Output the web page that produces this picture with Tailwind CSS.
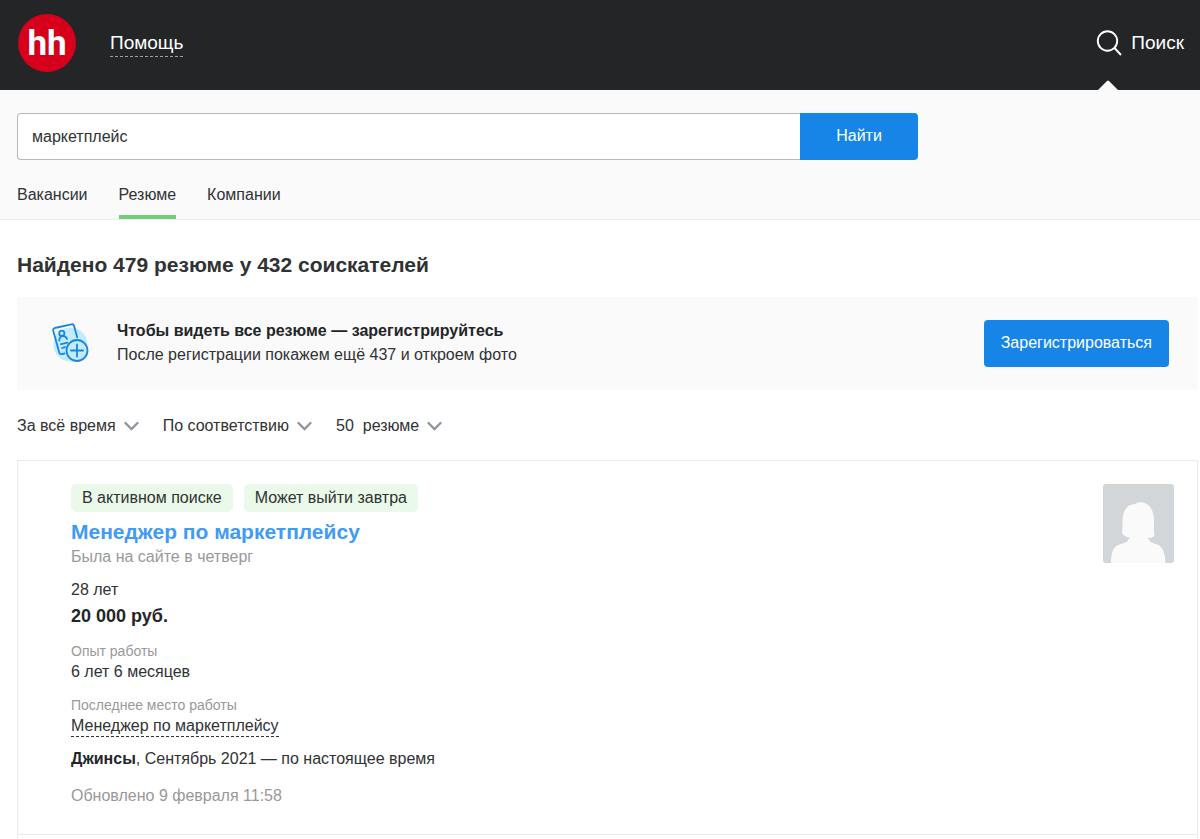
<!DOCTYPE html>
<html lang="ru">
<head>
<meta charset="utf-8">
<meta name="viewport" content="width=device-width, initial-scale=1">
<title>Резюме — маркетплейс</title>
<script src="https://cdn.jsdelivr.net/npm/@tailwindcss/browser@4"></script>
</head>
<body class="bg-white font-['Liberation_Sans',Arial,sans-serif] text-[16px] leading-6 text-[#303233] overflow-x-hidden">
<header class="relative flex h-[90px] items-center bg-[#232527] pb-1 pl-[18px] pr-4 text-white">
  <a href="#" aria-label="hh" class="flex size-[58px] items-center justify-center rounded-full bg-[#d6001c] font-[Roboto,sans-serif] text-[35px] font-bold leading-none">hh</a>
  <a href="#" class="ml-[34px] border-b border-dashed border-[#a0a2a4] text-[19px] leading-[26px]">Помощь</a>
  <a href="#" class="ml-auto flex items-center gap-2 text-[19px]">
    <svg class="size-7" viewBox="0 0 28 28" fill="none" stroke="currentColor" stroke-width="1.900" aria-hidden="true"><circle cx="12.500" cy="12" r="9.700"/><path d="M19.500 19l6.500 7"/></svg>
    <span>Поиск</span>
  </a>
  <svg class="absolute bottom-0 right-[82px] h-[10px] w-5" viewBox="0 0 20 10" aria-hidden="true"><path d="M0 10L9 1q1-1 2 0l9 9z" fill="#fafafa"/></svg>
</header>

<section class="border-b border-[#ebebeb] bg-[#fafafa] pl-[17px] pr-4 pt-[23px]">
  <form class="flex h-[47px] max-w-[901px]" onsubmit="return false">
    <input type="text" aria-label="Поиск резюме" value="маркетплейс" class="min-w-0 flex-1 rounded-l border border-r-0 border-[#b8b8b8] bg-white px-[14px] outline-none">
    <button type="submit" class="w-[118px] rounded-r bg-[#1785e5] pb-px text-white">Найти</button>
  </form>
  <nav class="mt-[23px] flex gap-[31px]">
    <a href="#" class="border-b-4 border-transparent pb-2">Вакансии</a>
    <a href="#" aria-current="page" class="border-b-4 border-[#74cc78] pb-2">Резюме</a>
    <a href="#" class="border-b-4 border-transparent pb-2">Компании</a>
  </nav>
</section>

<main class="pl-[17px] pr-[2px]">
  <h1 class="mt-[29px] text-[21px] font-bold leading-8">Найдено 479 резюме у 432 соискателей</h1>

  <section class="mt-4 flex items-center bg-[#fafafa] pb-[23px] pl-[34px] pr-[29px] pt-[22px]">
    <svg class="size-10 shrink-0" viewBox="0 0 40 40" fill="none" stroke="#1785e5" stroke-width="1.800" stroke-linecap="round" stroke-linejoin="round" aria-hidden="true">
      <circle cx="19.500" cy="21.500" r="17" fill="#c3ebfb" stroke="none"/>
      <path d="M13.500 30.500l-2.500.6q-2.200.5-2.800-1.700L2.200 7.500q-.4-2 1.500-2.500L20.500 1.300q2-.4 2.500 1.500l3.200 11.500"/>
      <circle cx="10.800" cy="10.300" r="2.600"/>
      <path d="M8.300 17.500q.2-4.400 3.500-4.400t4.200 2.800M10 21.200l6.500-1.500M11 25l3-.9"/>
      <circle cx="26" cy="27.500" r="10.500" fill="#c3ebfb"/>
      <path d="M26 21.500v12M20 27.500h12"/>
    </svg>
    <div class="ml-[26px] flex-1">
      <p class="font-bold text-[#232527]">Чтобы видеть все резюме — зарегистрируйтесь</p>
      <p>После регистрации покажем ещё 437 и откроем фото</p>
    </div>
    <button type="button" class="h-[47px] rounded bg-[#1785e5] px-[17px] pb-px text-white">Зарегистрироваться</button>
  </section>

  <div class="mt-6 flex gap-6">
    <div class="relative flex items-center">
      <select aria-label="Период" class="field-sizing-content appearance-none bg-transparent pr-[23px] outline-none"><option>За всё время</option><option>За месяц</option><option>За неделю</option></select>
      <svg class="pointer-events-none absolute right-0 h-[10px] w-[15px]" viewBox="0 0 15 10" fill="none" stroke="#8f959c" stroke-width="2.300" aria-hidden="true"><path d="M1.500 2l6 6 6-6" stroke-linecap="round"/></svg>
    </div>
    <div class="relative flex items-center">
      <select aria-label="Сортировка" class="field-sizing-content appearance-none bg-transparent pr-[23px] outline-none"><option>По соответствию</option><option>По дате изменения</option></select>
      <svg class="pointer-events-none absolute right-0 h-[10px] w-[15px]" viewBox="0 0 15 10" fill="none" stroke="#8f959c" stroke-width="2.300" aria-hidden="true"><path d="M1.500 2l6 6 6-6" stroke-linecap="round"/></svg>
    </div>
    <div class="relative flex items-center">
      <select aria-label="Резюме на странице" class="field-sizing-content appearance-none bg-transparent pr-[23px] outline-none"><option>50&nbsp;&nbsp;резюме</option><option>100&nbsp;&nbsp;резюме</option></select>
      <svg class="pointer-events-none absolute right-0 h-[10px] w-[15px]" viewBox="0 0 15 10" fill="none" stroke="#8f959c" stroke-width="2.300" aria-hidden="true"><path d="M1.500 2l6 6 6-6" stroke-linecap="round"/></svg>
    </div>
  </div>

  <div class="mt-[22px] border-x border-t border-[#ebebeb]">
    <article class="flex items-start border-b border-[#ebebeb] pb-[25px] pl-[53px] pr-[23px] pt-[23px]">
      <div class="min-w-0 flex-1">
        <div class="flex gap-[11px]">
          <span class="rounded-[5px] bg-[#eaf9ea] px-[11px] leading-7">В активном поиске</span>
          <span class="rounded-[5px] bg-[#eaf9ea] px-[11px] leading-7">Может выйти завтра</span>
        </div>
        <h2 class="mt-1 text-[21px] font-bold leading-8 text-[#3f9bf5]"><a href="#">Менеджер по маркетплейсу</a></h2>
        <p class="-mt-[3px] text-[#999]">Была на сайте в четверг</p>
        <p class="mt-[9px]">28 лет</p>
        <p class="text-[18px] font-bold leading-7 text-[#232527]">20&nbsp;000 руб.</p>
        <p class="mt-[11px] text-[14px] leading-5 text-[#999]">Опыт работы</p>
        <p class="leading-[22px]">6 лет 6 месяцев</p>
        <p class="mt-3 text-[14px] leading-5 text-[#999]">Последнее место работы</p>
        <p class="flex"><a href="#" class="border-b border-dashed border-[#303233] leading-[21px]">Менеджер по маркетплейсу</a></p>
        <p class="mt-[10px]"><b class="text-[#232527]">Джинсы</b>, Сентябрь 2021 — по настоящее время</p>
        <p class="mt-[13px] text-[#999]">Обновлено 9 февраля 11:58</p>
        <div class="h-px"></div>
      </div>
      <svg class="h-[79px] w-[71px] shrink-0 rounded-[3px]" viewBox="0 0 71 79" role="img" aria-label="Фото соискателя">
        <rect width="71" height="79" fill="#d2d6d9"/>
        <path fill="#fafafa" d="M8 79C8 67 11 61.500 18 60c4-1 7-2 7-4.500l2-1.200-1-.8c-3.500-.5-6.500-2.500-7-5 .5-3 .5-7 .5-11C19.500 27 24 20 32 20c2-1.500 4-2 6-1.800C47 18.700 51 27 51 37v10c0 2 .7 4 .2 5-1 1.500-4 2-7.200 2.200l2 1.300c.5 2.500 3 3.500 6 4.200C59 61.500 62 67 62.500 79z"/>
      </svg>
    </article>
    <article class="h-10"></article>
  </div>
</main>
</body>
</html>
